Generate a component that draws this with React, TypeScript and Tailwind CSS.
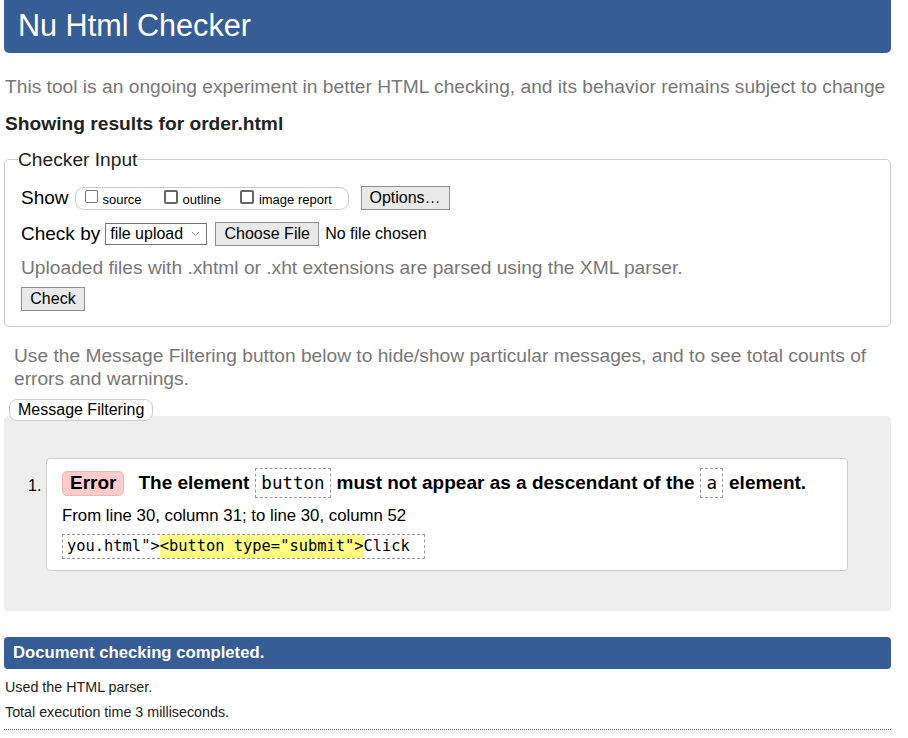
import React from 'react';

const sans = "font-['Liberation_Sans',Arial,sans-serif]";
const mono = "font-['DejaVu_Sans_Mono',monospace]";

function Box({ thick }: { thick?: boolean }) {
  return (
    <span
      className={
        thick
          ? 'inline-block w-[14px] h-[14px] border-2 border-[#666] rounded-[2px] bg-white'
          : 'inline-block w-[13px] h-[13px] border border-[#767676] rounded-[2px] bg-white'
      }
    />
  );
}

function Code({ children }: { children: React.ReactNode }) {
  return (
    <span
      className={`${mono} inline-flex items-center h-[30px] px-[5px] mx-[6px] border border-dashed border-[#999] text-[17.5px] font-normal`}
    >
      {children}
    </span>
  );
}

export default function App() {
  return (
    <div className={`${sans} bg-white text-black ml-[4px] w-[887px] pb-[10px]`}>
      {/* Header */}
      <div className="h-[53px] bg-[#365d95] rounded-b-[5px] pl-[14px] pt-[10px]">
        <h1 className="text-white text-[30.6px] leading-[30px] font-normal">Nu Html Checker</h1>
      </div>

      <p className="mt-[22px] ml-[1px] text-[19.2px] leading-[23px] text-[#777] whitespace-nowrap">
        This tool is an ongoing experiment in better HTML checking, and its behavior remains subject to change
      </p>
      <p className="mt-[14px] ml-[1px] text-[19.2px] leading-[23px] font-bold text-[#222]">
        Showing results for order.html
      </p>

      {/* Checker Input */}
      <fieldset className="mt-[14px] border border-[#ccc] rounded-[5px] px-[16px] pt-[16px] pb-[15px]">
        <legend className="ml-[-3px] text-[19.2px] leading-[21px] text-[#222]">Checker Input</legend>

        <div className="h-[24px] flex items-center text-[19px]">
          <span>Show</span>
          <div className="ml-[6px] h-[23px] w-[274px] flex items-center border border-[#ccc] rounded-[9px] pl-[9px] text-[13px]">
            <span className="flex items-center gap-[5px] -mt-[3px]">
              <Box />
              <span className="mt-[6px]">source</span>
            </span>
            <span className="ml-[22px] flex items-center gap-[5px] -mt-[3px]">
              <Box thick />
              <span className="mt-[6px]">outline</span>
            </span>
            <span className="ml-[19px] flex items-center gap-[5px] -mt-[3px]">
              <Box thick />
              <span className="mt-[6px]">image report</span>
            </span>
          </div>
          <button className="ml-[12px] h-[24px] w-[89px] bg-[#e9e9e9] border border-[#8f8f8f] text-[16px] leading-none">
            Options…
          </button>
        </div>

        <div className="mt-[12px] h-[24px] flex items-center text-[19px]">
          <span>Check by</span>
          <div className="ml-[5px] h-[22px] w-[102px] border border-[#767676] flex items-center pl-[4px] pr-[6px] text-[16px]">
            <span className="flex-1">file upload</span>
            <svg width="9" height="6" viewBox="0 0 9 6">
              <polyline points="1,1 4.5,4.5 8,1" fill="none" stroke="#888" strokeWidth="1" />
            </svg>
          </div>
          <button className="ml-[8px] h-[24px] w-[104px] bg-[#e9e9e9] border border-[#8f8f8f] text-[16px] leading-none">
            Choose File
          </button>
          <span className="ml-[6px] text-[16px]">No file chosen</span>
        </div>

        <p className="mt-[10px] text-[19.2px] leading-[23px] text-[#777]">
          Uploaded files with .xhtml or .xht extensions are parsed using the XML parser.
        </p>

        <button className="mt-[8px] h-[24px] w-[64px] bg-[#e9e9e9] border border-[#8f8f8f] text-[16px] leading-none">
          Check
        </button>
      </fieldset>

      <p className="mt-[17px] px-[10px] text-[19.2px] leading-[23px] text-[#777]">
        Use the Message Filtering button below to hide/show particular messages, and to see total counts of errors and
        warnings.
      </p>

      <button className="relative z-10 mt-[9px] ml-[5px] h-[22px] px-[8px] bg-white border border-[#ccc] rounded-[8px] text-[16px] leading-none">
        Message Filtering
      </button>

      {/* Results panel */}
      <div className="-mt-[6px] bg-[#eee] rounded-[4px] pt-[42px] pb-[40px] pl-[24px] pr-[43px] flex">
        <span className="mt-[18px] w-[18px] text-[16px] leading-[20px]">1.</span>
        <div className="flex-1 bg-white border border-[#ccc] rounded-[4px] pl-[15px] pt-[9px] pb-[11px]">
          <div className="h-[30px] flex items-center text-[19px] font-bold whitespace-nowrap">
            <span className="h-[25px] px-[7px] bg-[#fcc] border border-[#e8b8b8] rounded-[5px] flex items-center">
              Error
            </span>
            <span className="ml-[14px]">The element</span>
            <Code>button</Code>
            <span>must not appear as a descendant of the</span>
            <Code>a</Code>
            <span>element.</span>
          </div>
          <p className="mt-[8px] text-[16.8px] leading-[20px]">From line 30, column 31; to line 30, column 52</p>
          <div
            className={`${mono} mt-[8px] inline-flex items-center h-[25px] pl-[4px] pr-[14px] border border-dashed border-[#999] text-[15.4px]`}
          >
            <span>you.html"&gt;</span>
            <span className="bg-[#ffff80]">&lt;button type="submit"&gt;</span>
            <span>Click</span>
          </div>
        </div>
      </div>

      {/* Completion */}
      <div className="mt-[26px] h-[32px] bg-[#365d95] rounded-[4px] flex items-center pl-[9px]">
        <span className="text-white text-[16.7px] font-bold">Document checking completed.</span>
      </div>
      <p className="mt-[6px] ml-[1px] text-[14.3px] leading-[25px] text-[#222]">Used the HTML parser.</p>
      <p className="ml-[1px] text-[14.3px] leading-[25px] text-[#222]">Total execution time 3 milliseconds.</p>
      <div className="mt-[4px] border-t border-dotted border-[#666]" />
    </div>
  );
}
